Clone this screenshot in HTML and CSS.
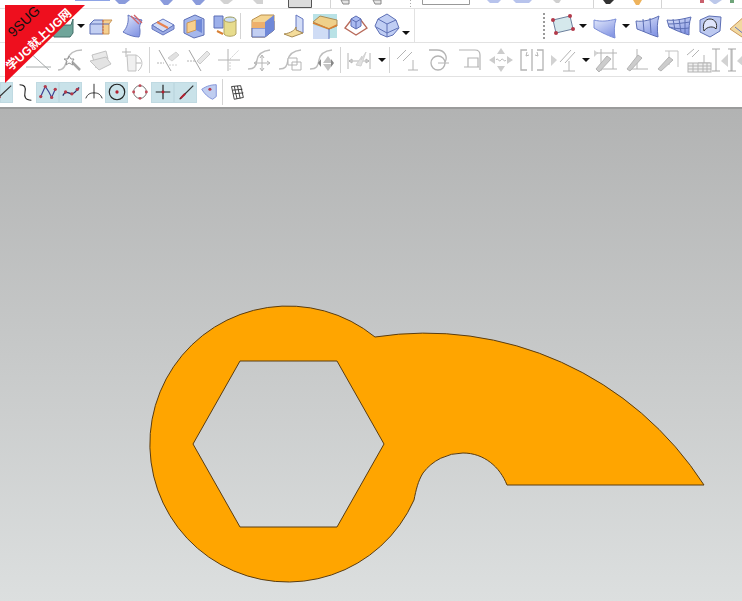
FILE: index.html
```html
<!DOCTYPE html>
<html lang="zh">
<head>
<meta charset="utf-8">
<title>UG sketch</title>
<link rel="stylesheet" href="styles.css">
</head>
<body>
<svg class="defs" width="0" height="0" aria-hidden="true">
  <defs>
    <linearGradient id="surf" x1="0" y1="0" x2="0.6" y2="1"><stop offset="0" stop-color="#e3e9fb"/><stop offset="1" stop-color="#8798e4"/></linearGradient>
    <symbol id="teal" viewBox="0 0 26 26"><path d="M2 12h20l2-6v14l-3 4H5z" fill="#6fa59a" stroke="#45706a"/></symbol>
    <symbol id="twobox" viewBox="0 0 26 26"><path d="M2 11l4-4h9v14H2z" fill="#c3cff2" stroke="#5d6fb5"/><path d="M15 7h6l3 0-3 4v10h-6z" fill="#f6cf8e" stroke="#c9975a"/><path d="M2 11h19" stroke="#5d6fb5" fill="none"/><path d="M15 7v14" stroke="#d06a4a" stroke-dasharray="2 1"/></symbol>
    <symbol id="sheet" viewBox="0 0 26 26"><path d="M9 2c5 3 9 4 14 5-2 4-3 7-2 10 0 3 0 5-1 7-5 0-11-2-16-5 4-4 6-10 5-17z" fill="url(#surf)" stroke="#6577c0"/><path d="M12 3l8 8M15 2l8 8" stroke="#d2646a" stroke-width="1.4" fill="none"/></symbol>
    <symbol id="slab" viewBox="0 0 26 26"><path d="M2 12l11-6 11 6-11 7z" fill="#d3ddf7" stroke="#6577c0"/><path d="M2 12v4l11 6 11-6v-4l-11 7z" fill="#9dace4" stroke="#6577c0"/><path d="M7 9l11 6" stroke="#e8824f" stroke-width="2" fill="none"/></symbol>
    <symbol id="block" viewBox="0 0 26 26"><path d="M3 7l11-5 9 4v16l-10 3-10-5z" fill="#a5b7ec" stroke="#5d6fb5"/><path d="M6 10l9-3v10l-9 3z" fill="#f6cf8e" stroke="#c9975a"/><path d="M15 7l6-1v14l-6-3z" fill="#6f88d8"/></symbol>
    <symbol id="cyl" viewBox="0 0 26 26"><path d="M2 3h9v12H2z" fill="#9db0ea" stroke="#5d6fb5"/><ellipse cx="18" cy="7" rx="6" ry="3" fill="#cfe0f5" stroke="#9a9a5a"/><path d="M12 7v14c2 3 10 3 12 0V7c-2 3-10 3-12 0z" fill="#e7dc8d" stroke="#b3a564"/><path d="M5 18l6 3" stroke="#d88034" stroke-width="2" fill="none"/></symbol>
    <symbol id="solid" viewBox="0 0 26 26"><path d="M2 7l9-5h13v15l-9 7H2z" fill="#f5d592" stroke="#b98f4c"/><path d="M2 15h13l9-7v9l-9 7H2z" fill="#c3cff2" stroke="#5d6fb5"/><path d="M15 9l9-7v15l-9 7z" fill="#6f88d8"/><path d="M2 9h13v6H2z" fill="#eeb06c"/></symbol>
    <symbol id="fold" viewBox="0 0 26 26"><path d="M15 2l7 4v14l-7-3z" fill="#d3ddf7" stroke="#6577c0"/><path d="M15 14c-1 3-5 6-12 7l8 3 11-4-7-3z" fill="#f4dc9a" stroke="#a98c55"/></symbol>
    <symbol id="tealbox" viewBox="0 0 26 26"><rect width="24" height="24" x="1" y="1" fill="#b9e2e6"/><path d="M1 9l7-6 17 4v6l-8 3z" fill="#efd08a" stroke="#a98c55"/><path d="M1 12l16 5v9H1z" fill="#cfdcf5"/><path d="M1 10l16 6 8-4" stroke="#d88034" fill="none" stroke-width="1.5"/><path d="M17 16v10" stroke="#6577c0"/></symbol>
    <symbol id="frustum" viewBox="0 0 26 26"><path d="M2 15L9 6h8l7 9-11 7z" fill="#fff" stroke="#b86a5a" stroke-width="1.3"/><path d="M8 6l5-3 5 3v7l-5 3-5-3z" fill="#a9baf0" stroke="#5d6fb5"/><path d="M8 6l5 3 5-3M13 9v7" stroke="#5d6fb5" fill="none"/></symbol>
    <symbol id="gem" viewBox="0 0 26 26"><path d="M13 1l9 6 3 8-6 7-6 2-7-3-5-8 3-7z" fill="#c0cef4" stroke="#5d6fb5"/><path d="M4 6l9 5 9-4M13 11v13M2 14l11 6 11-5" stroke="#5d6fb5" fill="none"/></symbol>
    <symbol id="quad" viewBox="0 0 26 26"><path d="M4 7l17-4 3 13-17 4z" fill="#d5e8ec" stroke="#6c7f9c"/><g fill="#b33a4a"><circle cx="4" cy="7" r="2"/><circle cx="21" cy="3" r="2"/><circle cx="24" cy="16" r="2"/><circle cx="7" cy="20" r="2"/></g></symbol>
    <symbol id="face" viewBox="0 0 26 26"><path d="M2 7c7 2 15 1 22-1-2 6-2 12-1 19C14 22 7 18 2 15z" fill="url(#surf)" stroke="#7b8dd6"/></symbol>
    <symbol id="grid3" viewBox="0 0 26 26"><path d="M1 8c7 1 15-1 23-5-2 6-2 13-1 21-7-2-15-6-21-8z" fill="url(#surf)" stroke="#5d6fb5"/><path d="M8 6l1 13M15 5l1 15" stroke="#5d6fb5" fill="none"/></symbol>
    <symbol id="grid4" viewBox="0 0 26 26"><path d="M1 7c8 1 16-1 24-3-2 6-2 11-2 18-7-2-14-5-20-8z" fill="url(#surf)" stroke="#5d6fb5"/><path d="M7 6l2 11M13 6l2 13M19 5v15M2 11c8 0 15-1 22-2M3 14c7 2 13 2 20 1" stroke="#5d6fb5" fill="none"/></symbol>
    <symbol id="hole" viewBox="0 0 26 26"><path d="M3 7l9-4 12 1-1 14-10 6-10-5z" fill="#bdc9f0" stroke="#5d6fb5"/><path d="M7 18c-2-7 1-12 6-12s8 5 6 10c-2-3-9-3-12 2z" fill="#dfe5fb" stroke="#333"/></symbol>
    <symbol id="ribbonface" viewBox="0 0 26 26"><path d="M2 16L18 2l6 10-10 12z" fill="#f2d9a0" stroke="#c9975a"/><path d="M7 14l10 8" stroke="#6577c0" fill="none"/></symbol>

    <symbol id="g-lines" viewBox="0 0 26 26"><path d="M1 3l22 20M0 20h25" stroke="#9aa0a0" fill="none"/></symbol>
    <symbol id="g-wand" viewBox="0 0 26 26"><path d="M1 23c6 0 7-4 9-10 2-6 7-10 15-10" stroke="#b5b5b5" stroke-width="1.5" fill="none"/><path d="M13 13l10 10" stroke="#999" stroke-width="2.5"/><path d="M12 9l2 3 3 0-2 3 1 3-4-2-3 2 1-4-3-2 4 0z" fill="#fff" stroke="#888"/></symbol>
    <symbol id="g-planes" viewBox="0 0 26 26"><path d="M4 8l14-4 2 8-12 9z" fill="#e6e6e6" stroke="#bbb"/><path d="M2 14l16-4 5 7-12 6z" fill="#e0e0e0" stroke="#bbb"/></symbol>
    <symbol id="g-trim" viewBox="0 0 26 26"><path d="M3 5h9M7 1v9" stroke="#aaa" fill="none"/><path d="M8 8h9v16H9z" fill="#eee" stroke="#bbb"/><path d="M17 8c7 3 8 11 2 16" stroke="#bbb" fill="none"/><path d="M17 16h5" stroke="#aaa"/></symbol>
    <symbol id="g-eraser" viewBox="0 0 26 26"><path d="M5 3l12 21" stroke="#999" fill="none"/><path d="M14 11l8-6 3 3-7 6z" fill="#ddd" stroke="#ccc"/><path d="M3 16h7" stroke="#aaa" stroke-dasharray="2 1"/><path d="M15 18h8" stroke="#ccc" stroke-dasharray="2 1"/></symbol>
    <symbol id="g-pencil" viewBox="0 0 26 26"><path d="M4 3l12 21" stroke="#999" fill="none"/><path d="M12 14l10-10 3 3-10 10z" fill="#e4e4e4" stroke="#c4c4c4"/><path d="M2 14h8" stroke="#aaa" stroke-dasharray="2 1"/></symbol>
    <symbol id="g-cross" viewBox="0 0 26 26"><path d="M2 13h22M12 2v22" stroke="#aaa" fill="none"/><path d="M14 12l9-9M14 12v11" stroke="#ccc" stroke-dasharray="2 1" fill="none"/></symbol>
    <symbol id="g-move" viewBox="0 0 26 26"><path d="M1 22c7 0 8-3 9-9 1-6 5-9 13-10" stroke="#b5b5b5" stroke-width="1.5" fill="none"/><path d="M15 9v14M8 16h14M13 11l2-3 2 3M13 21l2 3 2-3M10 14l-3 2 3 2M20 14l3 2-3 2" stroke="#aaa" fill="none"/></symbol>
    <symbol id="g-copy" viewBox="0 0 26 26"><path d="M1 22c7 0 8-3 9-9 1-6 5-9 13-10" stroke="#b5b5b5" stroke-width="1.5" fill="none"/><path d="M10 11h9v7h-9zM14 15h9v8h-9z" fill="#fff" stroke="#aaa"/></symbol>
    <symbol id="g-arrows" viewBox="0 0 26 26"><path d="M1 22c7 0 8-3 9-9 1-6 5-9 13-10" stroke="#b5b5b5" stroke-width="1.5" fill="none"/><path d="M14 16l5-7 5 7zM14 17l5 7 5-7z" fill="#bbb"/><path d="M12 12v8l-3-4zM22 12v8l3-4z" fill="#777"/></symbol>
    <symbol id="g-dim" viewBox="0 0 26 26"><path d="M2 6v16M24 6v16M3 14h20M3 14l3-2v4zM23 14l-3-2v4z" stroke="#aaa" fill="none"/><path d="M10 18l6-9-1 4 5-8-5 14z" fill="#ddd" stroke="#ccc"/></symbol>
    <symbol id="g-par" viewBox="0 0 26 26"><path d="M2 12L11 3M8 14l9-9M13 23h10M18 13v10" stroke="#aaa" fill="none"/></symbol>
    <symbol id="g-circ" viewBox="0 0 26 26"><path d="M3 3h8c8 0 11 7 8 12" stroke="#aaa" stroke-width="1.3" fill="none"/><circle cx="12" cy="16" r="7" stroke="#aaa" fill="none" stroke-width="1.3"/><path d="M12 16h11" stroke="#aaa"/></symbol>
    <symbol id="g-fillet" viewBox="0 0 26 26"><path d="M2 3h16c3 0 5 2 5 5v15M7 20h15M11 11h10v9h-10z" stroke="#aaa" stroke-width="1.2" fill="none"/></symbol>
    <symbol id="g-four" viewBox="0 0 26 26"><path d="M13 1l4 6H9zM13 25l4-6H9zM1 13l6-4v8zM25 13l-6-4v8z" fill="#c6c6c6"/><path d="M8 13c2-3 3 3 5 0s3 3 5 0" stroke="#aaa" fill="none"/></symbol>
    <symbol id="g-mirror" viewBox="0 0 26 26"><path d="M8 3H2v20h6M18 3h6v20h-6M13 2v22" stroke="#aaa" stroke-width="1.3" fill="none"/><path d="M8 5l-1 4 3-1M18 5l1 4-3-1" stroke="#aaa" fill="none"/></symbol>
    <symbol id="g-tri-par" viewBox="0 0 26 26"><path d="M1 8l6 5-6 6z" fill="#ccc"/><path d="M10 15L21 3M15 16L25 5M13 24h12M19 14v10" stroke="#aaa" fill="none"/></symbol>
    <symbol id="g-tool1" viewBox="0 0 26 26"><path d="M1 3l4 3-4 4z" fill="#ccc"/><path d="M8 2v22M20 2v20M4 6h20M8 22h16" stroke="#aaa" fill="none"/><path d="M3 22L14 9l4 3-12 13z" fill="#c6c6c6" stroke="#aaa"/></symbol>
    <symbol id="g-tool2" viewBox="0 0 26 26"><path d="M13 2v20M6 22h18" stroke="#aaa" fill="none"/><path d="M3 22L14 8l4 3-12 13z" fill="#c6c6c6" stroke="#aaa"/></symbol>
    <symbol id="g-tool3" viewBox="0 0 26 26"><path d="M10 4h13v16M14 4v14" stroke="#bbb" fill="none"/><path d="M3 22L14 10l4 3-12 11z" fill="#c6c6c6" stroke="#aaa"/></symbol>
    <symbol id="g-keyb" viewBox="0 0 26 26"><path d="M1 8l7-6M6 10l7-7M12 16h12M18 8v8" stroke="#aaa" fill="none"/><rect x="2" y="16" width="23" height="9" fill="#eee" stroke="#aaa"/><path d="M2 19h23M2 22h23M7 16v9M12 16v9M17 16v9M21 16v9" stroke="#aaa"/></symbol>
    <symbol id="g-ibeam" viewBox="0 0 26 26"><path d="M3 2h8M3 24h8M7 2v22" stroke="#999" fill="none"/><path d="M19 7v13l-7-6z" fill="#ccc"/><path d="M22 2v22" stroke="#aaa"/></symbol>

    <symbol id="s-line" viewBox="0 0 22 22"><path d="M5 18L20 4" stroke="#333" fill="none" stroke-width="1.3"/><path d="M4 19l4-3" stroke="#b11f2f" stroke-width="2.5"/></symbol>
    <symbol id="s-squig" viewBox="0 0 22 22"><path d="M5 3c6 0 7 3 6 8s0 9 7 9" stroke="#222" stroke-width="1.2" fill="none"/></symbol>
    <symbol id="s-poly" viewBox="0 0 22 22"><path d="M3 16L8 5l4 6 3 6 4-9" stroke="#3c3f90" fill="none" stroke-width="1.3"/><g fill="#b33a4a"><circle cx="3" cy="16" r="1.8"/><circle cx="8" cy="5" r="1.8"/><circle cx="15" cy="17" r="1.8"/><circle cx="19" cy="8" r="1.8"/></g></symbol>
    <symbol id="s-spline" viewBox="0 0 22 22"><path d="M2 15c3-6 6-3 9-2s5-3 9-7" stroke="#26306a" fill="none" stroke-width="1.4"/><g fill="#b33a4a"><circle cx="5" cy="11" r="1.8"/><circle cx="12" cy="13" r="1.8"/><circle cx="18" cy="8" r="1.8"/></g></symbol>
    <symbol id="s-tang" viewBox="0 0 22 22"><path d="M11 2v16M2 18c2-5 5-6 9-6s7 1 9 6" stroke="#222" fill="none"/></symbol>
    <symbol id="s-center" viewBox="0 0 22 22"><circle cx="11" cy="11" r="8.500" stroke="#222" fill="none" stroke-width="1.3"/><circle cx="11" cy="11" r="1.8" fill="#b11f2f"/></symbol>
    <symbol id="s-ring" viewBox="0 0 22 22"><circle cx="11" cy="11" r="7" stroke="#666" fill="none"/><g fill="#c04a58"><circle cx="11" cy="4" r="1.6"/><circle cx="11" cy="18" r="1.6"/><circle cx="4" cy="11" r="1.6"/><circle cx="18" cy="11" r="1.6"/></g></symbol>
    <symbol id="s-plus" viewBox="0 0 22 22"><path d="M3 11h16M11 3v16" stroke="#222" stroke-width="1.3"/><circle cx="11" cy="11" r="1.6" fill="#b11f2f"/></symbol>
    <symbol id="s-slash" viewBox="0 0 22 22"><path d="M4 19L19 4" stroke="#333" stroke-width="1.3"/><path d="M5 18l5-5" stroke="#b11f2f" stroke-width="2.2"/></symbol>
    <symbol id="s-patch" viewBox="0 0 22 22"><path d="M3 8c6-4 11-5 16-5v13l-4 3C10 17 6 13 3 8z" fill="#bfcdf0" stroke="#7b8dd6"/><circle cx="12" cy="8" r="1.7" fill="#b33a4a"/></symbol>
    <symbol id="s-grid" viewBox="0 0 22 22"><path d="M5 5l10-1 3 13-10 2zM8 4.600l3 14M11.500 4.300l3 13.800M6 9l11-1M7 13l11-1" fill="#fff" stroke="#333"/></symbol>
  </defs>
</svg>

<div class="page">
  <header class="toolbars">
    <div class="strip">
      <svg class="strip-art" width="742" height="8" viewBox="0 0 742 8" aria-hidden="true">
        <path d="M75 0h35v1H75z" fill="#8ea4e6"/>
        <path d="M115 0h15l-5 4h-6zM160 0h13l-5 5h-4zM192 0h13l-5 5h-4z" fill="#8a9bdc"/>
        <path d="M220 0h13l-5 4h-4zM253 0h10v4h-6z" fill="#d2d2d2"/>
        <path d="M288.500 0v7.500h23V0" fill="#dcdcdc" stroke="#555"/>
        <path d="M330.500 0v8" stroke="#d4d4d4"/>
        <path d="M341 0h8v4h-6zM373 0h8v4h-6z" fill="#e4e4e4" stroke="#888"/>
        <path d="M410.500 0v8" stroke="#aaa" stroke-dasharray="1 2"/>
        <path d="M422.500 0v4.500h47V0" fill="none" stroke="#999"/>
        <path d="M487 0h14l-3 3h-8zM513 0h19l-3 3h-13z" fill="#b7c3ec"/>
        <path d="M553 0h8l-2 3h-3z" fill="#cfcfcf"/>
        <path d="M593.500 0v8M661.500 0v8" stroke="#d4d4d4"/>
        <path d="M603 0h11l-4 4h-4z" fill="#333"/>
        <path d="M633 0h9l-3 5h-3z" fill="#eeb35c"/>
        <path d="M709 0h13l-6 4h-2z" fill="#bcc8ea"/>
        <path d="M700 0h4v3h-4z" fill="#c9606c"/>
        <path d="M730 0h4v3h-4z" fill="#6fa57a"/>
      </svg>
    </div>

    <div class="row row-two">
      <div class="panel">
        <span class="slot"><svg class="ico"><use href="#teal"/></svg></span>
        <span class="drop"></span>
        <span class="slot"><svg class="ico"><use href="#twobox"/></svg></span>
        <span class="slot"><svg class="ico"><use href="#sheet"/></svg></span>
        <span class="slot"><svg class="ico"><use href="#slab"/></svg></span>
        <span class="slot"><svg class="ico"><use href="#block"/></svg></span>
        <span class="slot"><svg class="ico"><use href="#cyl"/></svg></span>
        <span class="sep sep-wide"></span>
        <span class="slot"><svg class="ico"><use href="#solid"/></svg></span>
        <span class="slot"><svg class="ico"><use href="#fold"/></svg></span>
        <span class="slot"><svg class="ico"><use href="#tealbox"/></svg></span>
        <span class="slot"><svg class="ico"><use href="#frustum"/></svg></span>
        <span class="slot"><svg class="ico"><use href="#gem"/></svg></span>
        <span class="drop drop-gem"></span>
      </div>
      <div class="panel-right">
        <span class="grip"></span>
        <span class="slot"><svg class="ico"><use href="#quad"/></svg></span>
        <span class="drop drop-low"></span>
        <span class="slot"><svg class="ico"><use href="#face"/></svg></span>
        <span class="drop drop-low"></span>
        <span class="slot"><svg class="ico"><use href="#grid3"/></svg></span>
        <span class="slot"><svg class="ico"><use href="#grid4"/></svg></span>
        <span class="slot"><svg class="ico"><use href="#hole"/></svg></span>
        <span class="slot"><svg class="ico"><use href="#ribbonface"/></svg></span>
      </div>
    </div>

    <div class="row row-three">
      <span class="slot"><svg class="ico"><use href="#g-lines"/></svg></span>
      <span class="slot"><svg class="ico"><use href="#g-wand"/></svg></span>
      <span class="slot"><svg class="ico"><use href="#g-planes"/></svg></span>
      <span class="slot"><svg class="ico"><use href="#g-trim"/></svg></span>
      <span class="sep sep-first"></span>
      <span class="slot"><svg class="ico"><use href="#g-eraser"/></svg></span>
      <span class="slot"><svg class="ico"><use href="#g-pencil"/></svg></span>
      <span class="slot"><svg class="ico"><use href="#g-cross"/></svg></span>
      <span class="slot"><svg class="ico"><use href="#g-move"/></svg></span>
      <span class="slot"><svg class="ico"><use href="#g-copy"/></svg></span>
      <span class="slot"><svg class="ico"><use href="#g-arrows"/></svg></span>
      <span class="sep"></span>
      <span class="slot"><svg class="ico"><use href="#g-dim"/></svg></span>
      <span class="drop drop-tight"></span>
      <span class="sep"></span>
      <span class="slot"><svg class="ico"><use href="#g-par"/></svg></span>
      <span class="slot"><svg class="ico"><use href="#g-circ"/></svg></span>
      <span class="slot"><svg class="ico"><use href="#g-fillet"/></svg></span>
      <span class="slot"><svg class="ico"><use href="#g-four"/></svg></span>
      <span class="slot"><svg class="ico"><use href="#g-mirror"/></svg></span>
      <span class="slot"><svg class="ico"><use href="#g-tri-par"/></svg></span>
      <span class="drop drop-tight"></span>
      <span class="slot"><svg class="ico"><use href="#g-tool1"/></svg></span>
      <span class="slot"><svg class="ico"><use href="#g-tool2"/></svg></span>
      <span class="slot"><svg class="ico"><use href="#g-tool3"/></svg></span>
      <span class="slot"><svg class="ico"><use href="#g-keyb"/></svg></span>
      <span class="slot slot-narrow"><svg class="ico"><use href="#g-ibeam"/></svg></span>
      <span class="slot slot-narrow"><svg class="ico"><use href="#g-ibeam"/></svg></span>
    </div>

    <div class="row row-four">
      <span class="tool tool-cut on"><svg class="ico-s"><use href="#s-line"/></svg></span>
      <span class="tool"><svg class="ico-s"><use href="#s-squig"/></svg></span>
      <span class="tool on"><svg class="ico-s"><use href="#s-poly"/></svg></span>
      <span class="tool on"><svg class="ico-s"><use href="#s-spline"/></svg></span>
      <span class="tool"><svg class="ico-s"><use href="#s-tang"/></svg></span>
      <span class="tool on"><svg class="ico-s"><use href="#s-center"/></svg></span>
      <span class="tool"><svg class="ico-s"><use href="#s-ring"/></svg></span>
      <span class="tool on"><svg class="ico-s"><use href="#s-plus"/></svg></span>
      <span class="tool on"><svg class="ico-s"><use href="#s-slash"/></svg></span>
      <span class="tool"><svg class="ico-s"><use href="#s-patch"/></svg></span>
      <span class="sep sep-small"></span>
      <span class="tool"><svg class="ico-s"><use href="#s-grid"/></svg></span>
    </div>
  </header>

  <main class="viewport">
    <svg class="part" width="742" height="492" viewBox="0 109 742 492" role="img" aria-label="Wrench profile">
      <path class="part-shape" fill-rule="evenodd" d="M375 337A138 138 0 1 0 414 500C416 490 418 481 423 473A50 50 0 0 1 463 453C484 453 500 467 507 485H704A331 331 0 0 0 375 337ZM193 444L240 361H337L384 444L337 527H240Z"/>
    </svg>
  </main>

  <aside class="ribbon">
    <span class="ribbon-brand">9SUG</span>
    <span class="ribbon-slogan">学UG就上UG网</span>
  </aside>
</div>
</body>
</html>
```
FILE: styles.css
```css
* {
  box-sizing: border-box;
}

html,
body {
  margin: 0;
  padding: 0;
  background: #fff;
}

.defs {
  position: absolute;
}

.page {
  position: relative;
  width: 742px;
  height: 601px;
  overflow: hidden;
  display: flex;
  flex-direction: column;
  font-family: "Liberation Sans", "Noto Sans CJK SC", sans-serif;
}

.toolbars {
  height: 109px;
  flex: none;
  background: #fff;
  border-bottom: 2px solid #9a9b9b;
  display: flex;
  flex-direction: column;
}

.strip {
  height: 9px;
  flex: none;
  border-bottom: 1px solid #e2e2e2;
  overflow: hidden;
}

.strip-art {
  display: block;
}

.row {
  display: flex;
  align-items: center;
  flex: none;
  overflow: hidden;
  white-space: nowrap;
}

.row-two {
  height: 34px;
  border-bottom: 1px solid #e2e2e2;
  justify-content: space-between;
}

.panel {
  width: 415px;
  height: 100%;
  padding-left: 46px;
  display: flex;
  align-items: center;
  border-right: 1px solid #e2e2e2;
  flex: none;
}

.panel-right {
  width: 199px;
  height: 100%;
  display: flex;
  align-items: center;
  flex: none;
}

.row-three {
  height: 34px;
  border-bottom: 1px solid #e2e2e2;
  padding-left: 23px;
}

.row-three .ico {
  opacity: 0.88;
}

.row-four {
  height: 30px;
}

.slot {
  width: 31px;
  height: 30px;
  flex: none;
  display: flex;
  align-items: center;
  justify-content: center;
}

.slot-narrow {
  width: 16px;
}

.ico {
  width: 26px;
  height: 26px;
  flex: none;
  overflow: visible;
}

.drop {
  width: 8px;
  height: 8px;
  flex: none;
  position: relative;
}

.drop::after {
  content: "";
  position: absolute;
  left: 0;
  top: 2px;
  border-style: solid;
  border-width: 4px 4px 0;
  border-color: #111 transparent transparent;
}

.drop-gem {
  margin-top: 14px;
}

.drop-low {
  margin: 0 2px;
}

.drop-tight {
  margin: 0 2px 0 4px;
  width: 6px;
}

.sep {
  width: 6px;
  height: 26px;
  flex: none;
  background: linear-gradient(#d4d4d4, #d4d4d4) center / 1px 100% no-repeat;
}

.sep-first {
  width: 4px;
}

.sep-wide {
  width: 7px;
  background-position: left center;
}

.sep-small {
  width: 5px;
}

.grip {
  width: 3px;
  height: 26px;
  flex: none;
  border-left: 2px dotted #9a9a9a;
}

.tool {
  width: 23px;
  height: 21px;
  flex: none;
  display: flex;
  align-items: center;
  justify-content: center;
}

.tool-cut {
  width: 13px;
  justify-content: flex-end;
  overflow: hidden;
}

.tool.on {
  background: #c9e2e9;
  box-shadow: inset 0 0 0 1px #c0dae2;
}

.ico-s {
  width: 20px;
  height: 20px;
  flex: none;
}

.viewport {
  flex: 1;
  min-height: 0;
  background: linear-gradient(#b2b3b3, #dcdfdf);
}

.part {
  display: block;
}

.part-shape {
  fill: #ffa500;
  stroke: #5a3c10;
  stroke-width: 1;
}

.ribbon {
  position: absolute;
  left: 5px;
  top: 5px;
  width: 80px;
  height: 78px;
  background: #ee0f1e;
  clip-path: polygon(0 0, 100% 0, 0 100%);
}

.ribbon-brand,
.ribbon-slogan {
  position: absolute;
  white-space: nowrap;
  transform-origin: 0 0;
  transform: rotate(-43deg);
}

.ribbon-brand {
  left: 0;
  top: 24px;
  font-size: 14px;
  line-height: 14px;
  color: #111;
}

.ribbon-slogan {
  left: -1px;
  top: 59px;
  font-size: 12px;
  line-height: 12px;
  font-weight: 700;
  color: #fff;
}
```
